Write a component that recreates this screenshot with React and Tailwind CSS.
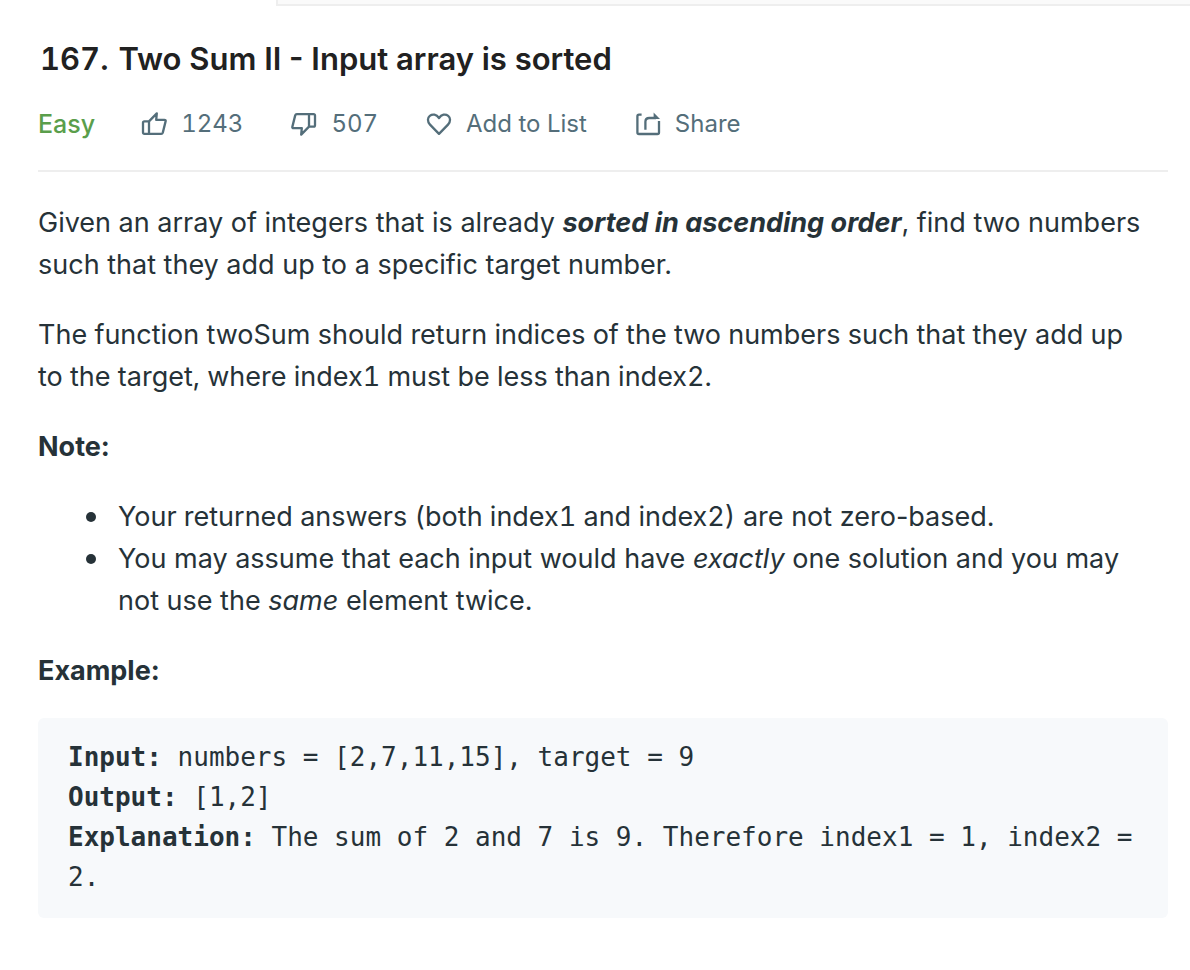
function ThumbIcon({ down = false }) {
  return (
    <svg
      viewBox="0 0 26 26"
      className={down ? "size-[26px] shrink-0 rotate-180" : "size-[26px] shrink-0"}
      fill="none"
      stroke="currentColor"
      strokeWidth="2.3"
      strokeLinejoin="round"
      aria-hidden="true"
    >
      <path d="M8 10.4 15.8 2.4 15.2 8.8H23.4Q25 8.8 24.6 10.4L21.8 21.6Q21.4 22.8 20.2 22.8H3.4Q2 22.8 2 21.4V11.8Q2 10.4 3.4 10.4ZM8 10.4V22.8" />
    </svg>
  );
}

function HeartIcon() {
  return (
    <svg viewBox="0 0 26 26" className="size-[26px] shrink-0" fill="none" stroke="currentColor" strokeWidth="2.3" strokeLinejoin="round" aria-hidden="true">
      <path d="M13 22.9 4 13.6C1.2 10.6 1.4 6.7 3.8 4.8 6.6 2.7 10.4 3.3 13 7 15.6 3.3 19.4 2.7 22.2 4.8 24.6 6.7 24.8 10.6 22 13.6Z" />
    </svg>
  );
}

function ShareIcon() {
  return (
    <svg viewBox="0 0 26 26" className="size-[26px] shrink-0" fill="none" stroke="currentColor" strokeWidth="2.3" aria-hidden="true">
      <path d="M6.6 3.6H4Q2.4 3.6 2.4 5.2V21.4Q2.4 23 4 23H22.4Q24 23 24 21.4V10" />
      <path d="M10.4 18.8V10.8Q10.4 7 14.2 7H21" />
      <path d="M18.6 1.6 25 8.1H18.6Z" fill="currentColor" stroke="none" />
    </svg>
  );
}

function Action({ icon, label, name }) {
  return (
    <button type="button" aria-label={name} className="flex items-center gap-3.5">
      {icon}
      <span>{label}</span>
    </button>
  );
}

function Bullet({ children }) {
  return (
    <li className="flex gap-[22px] before:mt-4 before:size-2.5 before:shrink-0 before:rounded-full before:bg-[#263238]">
      <div>{children}</div>
    </li>
  );
}

export default function App() {
  return (
    <div className="min-h-screen bg-white font-['Inter',sans-serif] text-[#263238]">
      <div className="ml-[276px] h-1.5 border-b-2 border-l-2 border-[#eeeeee] bg-[#fafafa]" />
      <main className="pt-8 pr-[22px] pb-12 pl-[38px]">
        <header className="border-b-2 border-[#eeeeee] pb-7">
          <h1 className="flex flex-wrap gap-x-2.5 pl-0.5 text-[31px] leading-[42px] font-semibold text-[#212121]">
            <span className="tabular-nums">167.</span>
            <span>Two Sum II - Input array is sorted</span>
          </h1>
          <div className="mt-[26px] flex items-center text-2xl leading-9 text-[#546e7a] tabular-nums">
            <span className="mr-[46px] text-[25px] font-medium text-[#5a9e4b]">Easy</span>
            <div className="flex gap-12">
              <Action icon={<ThumbIcon />} label="1243" name="Like, 1243" />
              <Action icon={<ThumbIcon down />} label="507" name="Dislike, 507" />
              <Action icon={<HeartIcon />} label="Add to List" />
              <Action icon={<ShareIcon />} label="Share" />
            </div>
          </div>
        </header>
        <article className="mt-[30px] space-y-7 text-[27px] leading-[42px]">
          <p>
            Given an array of integers that is already{" "}
            <strong className="italic">sorted in ascending order</strong>, find two numbers such
            that they add up to a specific target number.
          </p>
          <p className="tabular-nums">
            The function twoSum should return indices of the two numbers such that they add up
            <br />
            to the target, where index1 must be less than index2.
          </p>
          <p><strong>Note:</strong></p>
          <ul className="pl-12">
            <Bullet>
              <span className="tabular-nums">Your returned answers (both index1 and index2)</span> are not zero-based.
            </Bullet>
            <Bullet>
              You may assume that each input would have <em>exactly</em> one solution and you may
              <br />
              not use the <em>same</em> element twice.
            </Bullet>
          </ul>
          <p className="mb-[26px]"><strong>Example:</strong></p>
          <pre className="rounded-md bg-[#f7f9fb] px-[30px] pt-[19px] pb-[21px] font-['DejaVu_Sans_Mono',monospace] text-[26px] leading-10 whitespace-pre-wrap">
            <b>Input:</b>{" numbers = [2,7,11,15], target = 9\n"}
            <b>Output:</b>{" [1,2]\n"}
            <b>Explanation:</b>{" The sum of 2 and 7 is 9. Therefore index1 = 1, index2 = 2."}
          </pre>
        </article>
      </main>
    </div>
  );
}
